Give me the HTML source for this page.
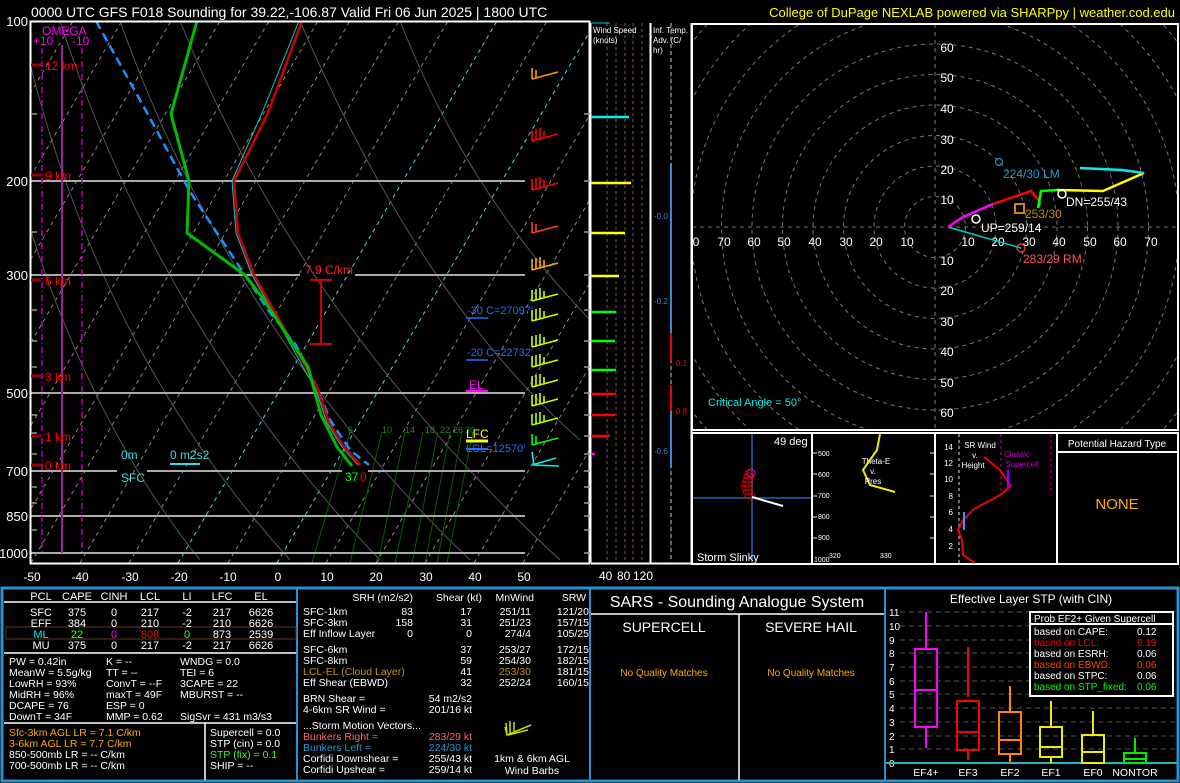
<!DOCTYPE html>
<html><head><meta charset="utf-8"><style>
html,body{margin:0;padding:0;background:#000;width:1180px;height:783px;overflow:hidden}
svg{display:block}
text{font-family:"Liberation Sans",sans-serif;}
</style></head><body>
<svg width="1180" height="783" viewBox="0 0 1180 783" xmlns="http://www.w3.org/2000/svg">
<defs>
<clipPath id="sk"><rect x="31" y="21" width="558" height="542"/></clipPath>
<clipPath id="hd"><rect x="692" y="24" width="486" height="406"/></clipPath>
<g id="barb" fill="none" stroke="currentColor" stroke-width="1.6">
<path d="M1,4 L27,-3 M1,4 L1,-7 M5,3 L5,-8 M9,2 L9,-9 M13,1 L13,-6"/>
</g>
<g id="barb2" fill="none" stroke="currentColor" stroke-width="1.6">
<path d="M1,4 L27,-3 M1,4 L1,-7 M5,3 L5,-5"/>
</g>
</defs>
<rect width="1180" height="783" fill="#000"/>
<!-- titles -->
<text x="31" y="17" fill="#fff" font-size="14">0000 UTC GFS F018 Sounding for 39.22,-106.87 Valid  Fri 06 Jun 2025 | 1800 UTC</text>
<text x="1175" y="17" fill="#ffff00" font-size="13" text-anchor="end">College of DuPage NEXLAB powered via SHARPpy | weather.cod.edu</text>

<!-- SKEW-T -->
<g clip-path="url(#sk)">
<g stroke="#888" stroke-width="1" stroke-dasharray="4,4" fill="none">
<path d="M-246,563 L73,21"/><path d="M-197,563 L122,21"/><path d="M-148,563 L171,21"/><path d="M-99,563 L220,21"/><path d="M-50,563 L269,21"/><path d="M-1,563 L318,21"/><path d="M31,563 L350,21"/><path d="M80,563 L399,21"/><path d="M129,563 L448,21"/><path d="M228,563 L547,21"/><path d="M326,563 L645,21"/><path d="M376,563 L695,21"/><path d="M425,563 L744,21"/><path d="M474,563 L793,21"/><path d="M523,563 L842,21"/>
</g>
<g stroke="#4dd" stroke-width="1" stroke-dasharray="4,4" fill="none">
<path d="M178,563 L497,21"/><path d="M277,563 L596,21"/>
</g>
<g stroke="#555" stroke-width="1" fill="none">
<path d="M560,560 Q300,320 180,21"/><path d="M470,560 Q230,330 120,21"/><path d="M380,560 Q160,330 60,21"/><path d="M290,560 Q90,340 20,21"/><path d="M200,560 Q40,360 -20,21"/><path d="M580,440 Q420,300 300,21"/><path d="M600,330 Q470,200 400,21"/>
</g>
<g stroke="#0a5a0a" stroke-width="1" fill="none">
<path d="M312,563 L350,432"/><path d="M350,563 L382,432"/><path d="M378,563 L405,432"/><path d="M395,563 L423,432"/><path d="M412,563 L438,432"/><path d="M425,563 L450,432"/><path d="M437,563 L462,432"/><path d="M447,563 L473,432"/>
</g>
<g fill="#1a8a1a" font-size="9"><text x="348" y="433">6</text><text x="382" y="433">10</text><text x="405" y="433">14</text><text x="425" y="433">18</text><text x="440" y="433">22</text><text x="453" y="433">26</text><text x="465" y="433">30</text></g>
<!-- isobars -->
<g stroke="#aaa" stroke-width="2">
<path d="M31,181 H525"/><path d="M31,275 H300 M355,275 H525"/><path d="M31,393 H525"/><path d="M31,471 H117 M147,471 H342 M368,471 H525"/><path d="M31,516 H525"/><path d="M31,553 H525"/>
</g>
<!-- omega -->
<g stroke="#b0b" stroke-width="1.5" stroke-dasharray="6,3,1,3"><path d="M42,48 V553"/><path d="M82,48 V553"/></g>
<path d="M62,45 V553" stroke="#a020a0" stroke-width="2"/>
<!-- profiles -->
<polyline fill="none" stroke="#1e90ff" stroke-width="2.5" stroke-dasharray="9,5" points="96,21 140,100 189,190 215,230 245,275 268,310 296,345 318,390 330,420 350,450 369,465"/>
<polyline fill="none" stroke="#0cc" stroke-width="1" points="299,21 262,113 232,181 236,233 252,275 266,300 303,367 316,390 327,423 342,447 358,465"/>
<polyline fill="none" stroke="#c00" stroke-width="2.5" points="302,21 268,113 234,181 238,233 254,275 268,300 306,367 318,390 329,423 344,447 360,465"/>
<polyline fill="none" stroke="#00bb00" stroke-width="3" points="197,21 171,114 189,181 187,233 245,275 264,300 308,367 321,415 337,447 352,466"/>
</g>
<rect x="30.5" y="21.5" width="559" height="542" fill="none" stroke="#fff" stroke-width="2"/>
<!-- left ticks -->
<g stroke="#999" stroke-width="1.5"><path d="M31,114 H37 M31,232 H37 M31,310 H37 M31,341 H37 M31,367 H37 M31,415 H37 M31,433 H37 M31,454 H37 M31,487 H37 M31,503 H37 M31,530 H37"/></g>
<g stroke="#999" stroke-width="1.5"><path d="M584,114 H590 M584,181 H590 M584,232 H590 M584,275 H590 M584,310 H590 M584,341 H590 M584,367 H590 M584,393 H590 M584,415 H590 M584,436 H590 M584,454 H590 M584,471 H590 M584,487 H590 M584,503 H590 M584,516 H590 M584,530 H590 M584,553 H590"/></g>
<g fill="#fff" font-size="13" text-anchor="end"><text x="28" y="26">100</text><text x="28" y="186">200</text><text x="28" y="280">300</text><text x="28" y="398">500</text><text x="28" y="476">700</text><text x="28" y="521">850</text><text x="28" y="558">1000</text></g>
<g fill="#fff" font-size="12" text-anchor="middle"><text x="32" y="581">-50</text><text x="80" y="581">-40</text><text x="130" y="581">-30</text><text x="179" y="581">-20</text><text x="228" y="581">-10</text><text x="278" y="581">0</text><text x="327" y="581">10</text><text x="376" y="581">20</text><text x="426" y="581">30</text><text x="475" y="581">40</text><text x="524" y="581">50</text></g>
<g fill="#f0f" font-size="12"><text x="42" y="35">OMEGA</text><text x="33" y="45">+10</text><text x="72" y="45">-10</text></g>
<g stroke="#900" stroke-width="3"><path d="M31,65 H41 M31,175 H41 M31,280 H41 M31,376 H41 M31,436 H41 M31,465 H41"/></g>
<g fill="#f00" font-size="12"><text x="45" y="70">12 km</text><text x="45" y="180">9 km</text><text x="45" y="285">6 km</text><text x="45" y="381">3 km</text><text x="45" y="441">1 km</text><text x="45" y="470">0 km</text></g>
<text x="305" y="274" fill="#f22" font-size="12">7.9 C/km</text>
<path d="M310,280 H332 M321,280 V344 M310,344 H332" stroke="#c00" stroke-width="2" fill="none"/>
<g font-size="11"><text x="467" y="314" fill="#1e6fff">-30 C=27097'</text><text x="467" y="356" fill="#1e6fff">-20 C=22732'</text><text x="469" y="389" fill="#f0f" font-size="12">EL</text><text x="466" y="438" fill="#ff0" font-size="12">LFC</text><text x="466" y="452" fill="#1e6fff">LCL=12570'</text></g>
<path d="M466,318 H488 M466,360 H488 M466,391 H488" stroke-width="1.5" stroke="#1e6fff"/>
<path d="M466,391 H488" stroke="#f0f" stroke-width="2"/>
<path d="M466,441 H488" stroke="#ff0" stroke-width="3"/>
<path d="M466,449 H488" stroke="#1e6fff" stroke-width="2"/>
<g font-size="12"><text x="121" y="459" fill="#3dd">0m</text><text x="170" y="459" fill="#3dd">0 m2s2</text><text x="121" y="482" fill="#3dd">SFC</text><text x="345" y="481" fill="#0f0">37</text><text x="360" y="481" fill="#f00">0</text></g>
<path d="M170,464 H200" stroke="#3dd" stroke-width="2"/>
<!-- barbs -->
<use href="#barb2" x="531" y="75" style="color:#f90"/>
<use href="#barb" x="531" y="137" style="color:#f00"/>
<use href="#barb" x="531" y="186" style="color:#f00"/>
<use href="#barb2" x="531" y="229" style="color:#f40"/>
<use href="#barb" x="531" y="266" style="color:#fa0"/>
<use href="#barb" x="531" y="297" style="color:#cf0"/>
<use href="#barb" x="531" y="317" style="color:#cf0"/>
<use href="#barb" x="531" y="343" style="color:#cf0"/>
<use href="#barb" x="531" y="363" style="color:#cf0"/>
<use href="#barb" x="531" y="383" style="color:#cf0"/>
<use href="#barb" x="531" y="402" style="color:#cf0"/>
<use href="#barb" x="531" y="421" style="color:#af0"/>
<use href="#barb2" x="531" y="441" style="color:#0f0"/>
<path d="M532,452 L534,465 L559,466 M532,465 L556,458" stroke="#0ee" stroke-width="1.6" fill="none"/>

<!-- wind speed column -->
<g stroke="#5a3a2a" stroke-width="1.5" stroke-dasharray="3,3"><path d="M607,23 V563 M616,23 V563 M625,23 V563 M633,23 V563 M642,23 V563 M651,23 V563"/></g>
<path d="M591,23 V563" stroke="#fff" stroke-width="1"/>
<path d="M591,23 H610" stroke="#0cc" stroke-width="1"/>
<path d="M650.5,23 V563 M691.5,23 V563 M591,563.5 H692" stroke="#fff" stroke-width="2"/>
<g fill="#fff" font-size="8"><text x="593" y="33">Wind Speed</text><text x="593" y="43">(knots)</text><text x="653" y="33">Inf. Temp.</text><text x="653" y="43">Adv. (C/</text><text x="653" y="53">hr)</text></g>
<g stroke-width="2.5"><path d="M591,117 H629" stroke="#0ee"/><path d="M591,183 H631" stroke="#ff0"/><path d="M591,233 H625" stroke="#ff0"/><path d="M591,276 H619" stroke="#ff0"/><path d="M591,312 H616" stroke="#0f0"/><path d="M591,341 H615" stroke="#0f0"/><path d="M591,370 H616" stroke="#0f0"/><path d="M591,394 H616" stroke="#f00"/><path d="M591,415 H615" stroke="#f00"/><path d="M591,436 H610" stroke="#f00"/><path d="M591,454 H595" stroke="#f0f"/></g>
<text x="599" y="580" fill="#fff" font-size="12">40</text><text x="617" y="580" fill="#fff" font-size="12">80</text><text x="633" y="580" fill="#fff" font-size="12">120</text>
<path d="M671,23 V563" stroke="#888" stroke-width="1.5" stroke-dasharray="4,3"/>
<path d="M671,163 V333 M671,411 V468" stroke="#3a8ad0" stroke-width="2"/>
<path d="M671,333 V361 M671,385 V411" stroke="#e00" stroke-width="2"/>
<g font-size="8"><text x="654" y="219" fill="#3a8ad0">-0.0</text><text x="654" y="304" fill="#3a8ad0">-0.2</text><text x="676" y="366" fill="#f00">0.1</text><text x="676" y="414" fill="#f00">0.8</text><text x="654" y="454" fill="#3a8ad0">-0.6</text></g>

<!-- HODOGRAPH -->
<g clip-path="url(#hd)">
<g fill="none" stroke="#777" stroke-width="1" stroke-dasharray="4,4">
<circle cx="935" cy="227" r="30.5"/><circle cx="935" cy="227" r="61"/><circle cx="935" cy="227" r="91.5"/><circle cx="935" cy="227" r="122"/><circle cx="935" cy="227" r="152.5"/><circle cx="935" cy="227" r="183"/><circle cx="935" cy="227" r="213.5"/><circle cx="935" cy="227" r="244"/><circle cx="935" cy="227" r="274.5"/><circle cx="935" cy="227" r="305"/>
<path d="M935,24 V430 M692,227 H1178"/>
</g>
<g fill="#fff" font-size="12" text-anchor="middle">
<text x="947" y="52">60</text><text x="947" y="82">50</text><text x="947" y="113">40</text><text x="947" y="144">30</text><text x="947" y="174">20</text><text x="947" y="204">10</text>
<text x="947" y="265">10</text><text x="947" y="295">20</text><text x="947" y="326">30</text><text x="947" y="356">40</text><text x="947" y="387">50</text><text x="947" y="417">60</text>
<text x="696" y="246">0</text><text x="724" y="246">70</text><text x="754" y="246">60</text><text x="784" y="246">50</text><text x="815" y="246">40</text><text x="846" y="246">30</text><text x="876" y="246">20</text><text x="907" y="246">10</text>
<text x="968" y="246">10</text><text x="998" y="246">20</text><text x="1029" y="246">30</text><text x="1059" y="246">40</text><text x="1090" y="246">50</text><text x="1120" y="246">60</text><text x="1151" y="246">70</text>
</g>
</g>
<rect x="692" y="24" width="486" height="406" fill="none" stroke="#fff" stroke-width="2"/>
<path d="M948,227 L1021,248" stroke="#0cc" stroke-width="1.5"/>
<polyline fill="none" stroke="#f0f" stroke-width="2.5" points="948,227 963,217 993,204"/>
<polyline fill="none" stroke="#f00" stroke-width="2.5" points="993,204 1031,191 1040,202"/>
<polyline fill="none" stroke="#0f0" stroke-width="2.5" points="1040,202 1038,208 1041,191 1057,190"/>
<polyline fill="none" stroke="#ff0" stroke-width="2.5" points="1057,190 1103,191 1144,173"/>
<polyline fill="none" stroke="#0ee" stroke-width="2.5" points="1144,173 1122,170 1080,168"/>
<circle cx="1021" cy="248" r="4" fill="none" stroke="#f44" stroke-width="1.2"/>
<circle cx="999" cy="162" r="3.5" fill="none" stroke="#1e90d0" stroke-width="1.2"/>
<circle cx="1062" cy="194" r="4" fill="none" stroke="#fff" stroke-width="1.5"/>
<circle cx="976" cy="219" r="4" fill="none" stroke="#fff" stroke-width="1.5"/>
<rect x="1015" y="204" width="9" height="9" fill="none" stroke="#c80" stroke-width="2"/>
<g font-size="12"><text x="1023" y="263" fill="#f55">283/29 RM</text><text x="1003" y="178" fill="#1e9ad0">224/30 LM</text><text x="1066" y="206" fill="#fff">DN=255/43</text><text x="981" y="232" fill="#fff">UP=259/14</text><text x="1025" y="218" fill="#c80">253/30</text><text x="708" y="406" fill="#0ee" font-size="11">Critical Angle = 50°</text></g>

<!-- insets -->
<g stroke="#fff" stroke-width="2" fill="none"><rect x="692" y="433" width="486" height="131"/><path d="M812,433 V564 M935,433 V564 M1057,433 V564 M1057,452 H1178"/></g>
<path d="M752,434 V563 M693,498 H811" stroke="#1a4a8a" stroke-width="2"/>
<g fill="none" stroke="#d00" stroke-width="1"><ellipse cx="750" cy="496" rx="5" ry="3"/><ellipse cx="748" cy="492" rx="5" ry="3"/><ellipse cx="747" cy="488" rx="5" ry="3"/><ellipse cx="747" cy="484" rx="5" ry="3"/><ellipse cx="748" cy="480" rx="5" ry="3"/><ellipse cx="749" cy="476" rx="5" ry="3"/><ellipse cx="750" cy="473" rx="5" ry="3"/></g>
<circle cx="751" cy="473" r="4" fill="none" stroke="#c0c"/>
<path d="M752,497 L783,506" stroke="#fff" stroke-width="2"/>
<text x="774" y="445" fill="#fff" font-size="11">49 deg</text>
<text x="697" y="561" fill="#fff" font-size="11">Storm Slinky</text>
<g fill="#fff" font-size="7"><text x="818" y="456">500</text><text x="818" y="477">600</text><text x="818" y="498">700</text><text x="818" y="519">800</text><text x="818" y="540">900</text><text x="814" y="562">1000</text><text x="829" y="558">320</text><text x="880" y="558">330</text></g>
<g stroke="#999" stroke-width="1.5"><path d="M813,453 H817 M813,474 H817 M813,496 H817 M813,517 H817 M813,538 H817 M930,453 H934 M930,474 H934 M930,496 H934 M930,517 H934 M930,538 H934"/></g>
<polyline fill="none" stroke="#ee0" stroke-width="2" points="880,434 877,450 863,470 870,485 895,492"/>
<g fill="#fff" font-size="8" text-anchor="middle"><text x="876" y="464">Theta-E</text><text x="873" y="474">v.</text><text x="873" y="484">Pres</text></g>
<path d="M959,434 V563" stroke="#999" stroke-width="1.5" stroke-dasharray="3,3"/>
<path d="M1001,434 V495 M1051,434 V495" stroke="#604" stroke-width="2" stroke-dasharray="3,3"/>
<g fill="#fff" font-size="8" text-anchor="end"><text x="953" y="450">14</text><text x="953" y="466">12</text><text x="953" y="482">10</text><text x="953" y="499">8</text><text x="953" y="515">6</text><text x="953" y="532">4</text><text x="953" y="549">2</text></g>
<g fill="#fff" font-size="8" text-anchor="middle"><text x="980" y="448">SR Wind</text><text x="975" y="458">v.</text><text x="973" y="468">Height</text></g>
<g fill="#c0c" font-size="8" text-anchor="middle"><text x="1017" y="457">Classic</text><text x="1022" y="467">Supercell</text></g>
<polyline fill="none" stroke="#e00" stroke-width="2" points="984,457 1000,470 1011,486 1000,495 974,509 963,520 958,530 962,540 963,555 975,563"/>
<path d="M1008,470 V488" stroke="#80f" stroke-width="2.5"/>
<path d="M964,512 V530" stroke="#58f" stroke-width="2"/>
<text x="1117" y="447" fill="#fff" font-size="10" text-anchor="middle">Potential Hazard Type</text>
<text x="1117" y="509" fill="#fa0" font-size="15" text-anchor="middle">NONE</text>

<!-- BOTTOM PANEL -->
<rect x="2" y="588" width="1176" height="193" fill="none" stroke="#2b8fd0" stroke-width="3"/>
<g stroke="#2b8fd0" stroke-width="2"><path d="M297,588 V781 M590,588 V781 M885,588 V781"/></g>
<g stroke="#fff" stroke-width="1.5"><path d="M4,602 H296 M4,653 H296 M4,723 H296 M205,723 V780 M591,614 H884 M739,614 V780"/></g>
<rect x="6" y="627" width="290" height="12" fill="none" stroke="#5a3a1a" stroke-width="1"/>
<g fill="#fff" font-size="11" text-anchor="middle">
<text x="41" y="600">PCL</text><text x="77" y="600">CAPE</text><text x="114" y="600">CINH</text><text x="150" y="600">LCL</text><text x="187" y="600">LI</text><text x="222" y="600">LFC</text><text x="261" y="600">EL</text>
<text x="41" y="616">SFC</text><text x="77" y="616">375</text><text x="114" y="616">0</text><text x="150" y="616">217</text><text x="187" y="616">-2</text><text x="222" y="616">217</text><text x="261" y="616">6626</text>
<text x="41" y="627">EFF</text><text x="77" y="627">384</text><text x="114" y="627">0</text><text x="150" y="627">210</text><text x="187" y="627">-2</text><text x="222" y="627">210</text><text x="261" y="627">6626</text>
<text x="41" y="638" fill="#0ee">ML</text><text x="77" y="638" fill="#3f3">22</text><text x="114" y="638" fill="#f0f">0</text><text x="150" y="638" fill="#f00">808</text><text x="187" y="638" fill="#3f3">0</text><text x="222" y="638">873</text><text x="261" y="638">2539</text>
<text x="41" y="649">MU</text><text x="77" y="649">375</text><text x="114" y="649">0</text><text x="150" y="649">217</text><text x="187" y="649">-2</text><text x="222" y="649">217</text><text x="261" y="649">6626</text>
</g>
<g fill="#fff" font-size="10.5">
<text x="9" y="665">PW = 0.42in</text><text x="106" y="665">K = --</text><text x="180" y="665">WNDG = 0.0</text>
<text x="9" y="676">MeanW = 5.5g/kg</text><text x="106" y="676">TT = --</text><text x="180" y="676">TEI = 6</text>
<text x="9" y="687">LowRH = 93%</text><text x="106" y="687">ConvT = --F</text><text x="180" y="687">3CAPE = 22</text>
<text x="9" y="698">MidRH = 96%</text><text x="106" y="698">maxT = 49F</text><text x="180" y="698">MBURST = --</text>
<text x="9" y="709">DCAPE = 76</text><text x="106" y="709">ESP = 0</text>
<text x="9" y="720">DownT = 34F</text><text x="106" y="720">MMP = 0.62</text><text x="180" y="720">SigSvr = 431 m3/s3</text>
<text x="9" y="736" fill="#fa0">Sfc-3km AGL LR = 7.1 C/km</text>
<text x="9" y="747" fill="#fa0">3-6km AGL LR = 7.7 C/km</text>
<text x="9" y="758">850-500mb LR = -- C/km</text>
<text x="9" y="769">700-500mb LR = -- C/km</text>
<text x="210" y="736">Supercell = 0.0</text><text x="210" y="747">STP (cin) = 0.0</text><text x="210" y="758" fill="#3f3">STP (fix) = 0.1</text><text x="210" y="769">SHIP = --</text>
<text x="303" y="615">SFC-1km</text><text x="303" y="626">SFC-3km</text><text x="303" y="637">Eff Inflow Layer</text>
<text x="303" y="653">SFC-6km</text><text x="303" y="664">SFC-8km</text><text x="303" y="675" fill="#c8901a">LCL-EL (Cloud Layer)</text><text x="303" y="686">Eff Shear (EBWD)</text>
<text x="303" y="702">BRN Shear =</text><text x="303" y="713">4-6km SR Wind =</text>
<text x="303" y="729">...Storm Motion Vectors...</text>
<text x="303" y="740" fill="#f66">Bunkers Right =</text><text x="303" y="751" fill="#1e9ad0">Bunkers Left =</text>
<text x="303" y="762">Corfidi Downshear =</text><text x="303" y="773">Corfidi Upshear =</text>
</g>
<g fill="#fff" font-size="10.5" text-anchor="end">
<text x="413" y="601">SRH (m2/s2)</text><text x="482" y="601">Shear (kt)</text><text x="534" y="601">MnWind</text><text x="586" y="601">SRW</text>
<text x="413" y="615">83</text><text x="472" y="615">17</text><text x="531" y="615">251/11</text><text x="589" y="615">121/20</text>
<text x="413" y="626">158</text><text x="472" y="626">31</text><text x="531" y="626">251/23</text><text x="589" y="626">157/15</text>
<text x="413" y="637">0</text><text x="472" y="637">0</text><text x="531" y="637">274/4</text><text x="589" y="637">105/25</text>
<text x="472" y="653">37</text><text x="531" y="653">253/27</text><text x="589" y="653">172/15</text>
<text x="472" y="664">59</text><text x="531" y="664">254/30</text><text x="589" y="664">182/15</text>
<text x="472" y="675">41</text><text x="531" y="675" fill="#c8901a">253/30</text><text x="589" y="675">181/15</text>
<text x="472" y="686">32</text><text x="531" y="686">252/24</text><text x="589" y="686">160/15</text>
<text x="472" y="702">54 m2/s2</text><text x="472" y="713">201/16 kt</text>
<text x="472" y="740" fill="#f66">283/29 kt</text><text x="472" y="751" fill="#1e9ad0">224/30 kt</text>
<text x="472" y="762">255/43 kt</text><text x="472" y="773">259/14 kt</text>
</g>
<path d="M505,727 L507,735 L531,725 M507,735 L506,723 M510,733 L510,721 M514,731 L514,722 M508,735 L528,730" stroke="#cd0" stroke-width="1.5" fill="none"/>
<g fill="#fff" font-size="10.5" text-anchor="middle"><text x="532" y="762">1km &amp; 6km AGL</text><text x="532" y="774">Wind Barbs</text></g>
<g fill="#fff" text-anchor="middle"><text x="737" y="607" font-size="16">SARS - Sounding Analogue System</text><text x="664" y="632" font-size="14">SUPERCELL</text><text x="811" y="632" font-size="14">SEVERE HAIL</text></g>
<g fill="#fa0" font-size="10" text-anchor="middle"><text x="664" y="676">No Quality Matches</text><text x="811" y="676">No Quality Matches</text></g>
<!-- STP -->
<text x="1031" y="603" fill="#fff" font-size="12" text-anchor="middle">Effective Layer STP (with CIN)</text>
<g stroke="#555" stroke-width="1" stroke-dasharray="5,4"><path d="M900,612 H1176 M900,626 H1176 M900,640 H1176 M900,653 H1176 M900,667 H1176 M900,681 H1176 M900,694 H1176 M900,708 H1176 M900,722 H1176 M900,736 H1176 M900,749 H1176"/></g>
<g fill="#fff" font-size="10"><text x="889" y="616">11</text><text x="889" y="630">10</text><text x="889" y="644">9</text><text x="889" y="657">8</text><text x="889" y="671">7</text><text x="889" y="685">6</text><text x="889" y="698">5</text><text x="889" y="712">4</text><text x="889" y="726">3</text><text x="889" y="740">2</text><text x="889" y="753">1</text><text x="889" y="767">0</text></g>
<path d="M886,763 H1177" stroke="#2bb" stroke-width="2"/>
<g fill="none" stroke-width="2">
<g stroke="#f0f"><path d="M926,612 V649 M926,727 V748"/><rect x="915" y="649" width="22" height="78"/><path d="M915,690 H937"/></g>
<g stroke="#f00"><path d="M968,647 V697 M968,751 V760"/><rect x="957" y="701" width="22" height="49"/><path d="M957,732 H979"/></g>
<g stroke="#f80"><path d="M1010,686 V711 M1010,755 V763"/><rect x="999" y="712" width="22" height="42"/><path d="M999,740 H1021"/></g>
<g stroke="#ee0"><path d="M1051,701 V727 M1051,758 V763"/><rect x="1040" y="727" width="22" height="30"/><path d="M1040,747 H1062"/></g>
<g stroke="#ee0"><path d="M1093,711 V735"/><rect x="1082" y="735" width="22" height="28"/><path d="M1082,752 H1104"/></g>
<g stroke="#0e0"><path d="M1135,738 V753"/><rect x="1124" y="753" width="22" height="10"/><path d="M1124,759 H1146"/></g>
</g>
<g fill="#fff" font-size="10.5" text-anchor="middle"><text x="926" y="776">EF4+</text><text x="968" y="776">EF3</text><text x="1010" y="776">EF2</text><text x="1051" y="776">EF1</text><text x="1093" y="776">EF0</text><text x="1135" y="776">NONTOR</text></g>
<rect x="1030" y="612" width="143" height="84" fill="#000" stroke="#fff" stroke-width="2"/>
<path d="M1030,624 H1173" stroke="#fff" stroke-width="2"/>
<g font-size="10"><text x="1034" y="622" fill="#fff">Prob EF2+ Given Supercell</text>
<text x="1034" y="635" fill="#fff">based on CAPE:</text><text x="1137" y="635" fill="#fff">0.12</text>
<text x="1034" y="646" fill="#f00">based on LCL:</text><text x="1137" y="646" fill="#f00">0.19</text>
<text x="1034" y="657" fill="#fff">based on ESRH:</text><text x="1137" y="657" fill="#fff">0.06</text>
<text x="1034" y="668" fill="#f40">based on EBWD:</text><text x="1137" y="668" fill="#f40">0.06</text>
<text x="1034" y="679" fill="#fff">based on STPC:</text><text x="1137" y="679" fill="#fff">0.06</text>
<text x="1034" y="690" fill="#0f0">based on STP_fixed:</text><text x="1137" y="690" fill="#0f0">0.06</text></g>
</svg>
</body></html>
